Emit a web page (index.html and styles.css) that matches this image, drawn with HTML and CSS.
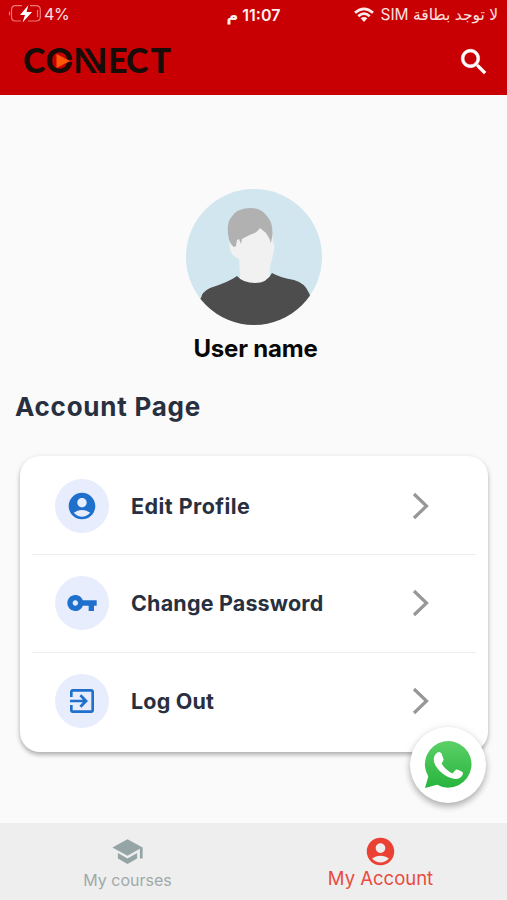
FILE: index.html
```html
<!DOCTYPE html>
<html lang="en">
<head>
<meta charset="utf-8">
<title>Account Page</title>
<link rel="stylesheet" href="styles.css">
</head>
<body>
<header class="header">
  <div class="status">
    <div class="battery">
      <svg width="34" height="20" viewBox="0 0 34 20"><path d="M14 1.700H7.500Q3.500 1.700 3.500 6V13Q3.500 17 7.500 17H13M22 1.700H28Q32.300 1.700 32.300 6V13Q32.300 17 28 17H20M29.500 6V13" fill="none" stroke="#ef7777" stroke-width="1.2"/><path d="M2 7Q-.5 9.400 2 12Z" fill="#ef7777"/><path d="M20.500 1L12 11H17L14.500 18.500L24 8H18.500Z" fill="#fff"/></svg>
      <span class="percent">4%</span>
    </div>
    <div class="clock" dir="rtl">11:07 م</div>
    <div class="carrier">
      <svg width="20" height="16" viewBox="0 0 20 16"><g fill="none" stroke="#ffe9e9" stroke-width="2.700"><path d="M1 5.800Q10-2.200 19 5.800"/><path d="M4.300 9.300Q10 4.100 15.700 9.300"/></g><path d="M6.600 11.300Q10 8.500 13.400 11.300L10 15Z" fill="#ffe9e9"/></svg>
      <span class="sim" dir="rtl">لا توجد بطاقة SIM</span>
    </div>
  </div>
  <div class="toolbar">
    <svg class="logo" width="160" height="46" viewBox="-2 -8 160 46" aria-label="CONNECT">
      <text class="letters" x="0 22.500 50.500 58 85 103 127.500" y="26">CONNECT</text>
      <path d="M57.500 0H76.500V28H57.500Z" fill="#c80003"/>
      <path d="M53 1.500H58L74 26H69ZM61.500 1.500H66.500L81.500 26H77Z" fill="#170c08"/>
      <path d="M40 12.800H50V15.200H40Z" fill="#c80003"/>
      <path d="M33.500 7V21L47 14Z" fill="#fa5706"/>
    </svg>
    <svg class="search" width="34" height="34" viewBox="0 0 24 24"><path fill="#fff" stroke="#fff" stroke-width=".4" d="M15.500 14h-.79l-.28-.27A6.500 6.500 0 1 0 13.730 14.430l.27.28v.79l5 4.990L20.490 19zm-6 0A4.500 4.500 0 1 1 9.500 5a4.500 4.500 0 0 1 0 9z"/></svg>
  </div>
</header>

<main class="content">
  <section class="user">
    <svg width="136" height="136" viewBox="0 0 136 136">
      <defs><clipPath id="disc"><circle cx="68" cy="68" r="68"/></clipPath></defs>
      <g clip-path="url(#disc)">
        <rect width="136" height="136" fill="#d1e6ee"/>
        <path d="M44 50Q42 59 46 65Q49 69 53 70Q54 82 54 90L51 97V106Q69 116 89 105L84 90L84 78Q87 67 88 61Q89 56 87 53L86 38L63 37L46 50Z" fill="#f1f1f1"/>
        <path d="M48 58Q43 55 42 45Q41 35 44 30Q50 19 64 19Q75 19 80 26Q87 33 86.500 45L85 54Q83 48 80 44L74 39Q71 44 66 45Q61 47 56 50L55 55L53 50L51 51L50 57Z" fill="#b1b1b1"/>
        <path d="M0 136V118L15 109Q16 103 24 99Q43 93 51 87Q57 94 69 94Q81 94 86 84Q95 89 108 91Q119 94 123 104L136 136Z" fill="#4d4d4d"/>
      </g>
    </svg>
    <div class="name">User name</div>
  </section>
  <h1 class="title">Account Page</h1>
  <nav class="card">
    <a class="row">
      <span class="bubble"><svg width="32" height="32" viewBox="0 0 24 24"><path d="M12 2C6.480 2 2 6.480 2 12s4.480 10 10 10 10-4.480 10-10S17.520 2 12 2zm0 4c1.930 0 3.500 1.570 3.500 3.500S13.930 13 12 13s-3.500-1.570-3.500-3.500S10.070 6 12 6zm0 14c-2.030 0-4.430-.82-6.140-2.880C7.550 15.800 9.680 15 12 15s4.450.8 6.140 2.120C16.430 19.180 14.030 20 12 20z"/></svg></span>
      <span class="label edit">Edit Profile</span>
      <svg class="chevron" width="18" height="28" viewBox="0 0 18 28"><path d="M2 2L14.500 14L2 26"/></svg>
    </a>
    <a class="row">
      <span class="bubble"><svg width="32" height="32" viewBox="0 0 24 24"><path d="M12.650 10C11.830 7.670 9.610 6 7 6c-3.310 0-6 2.690-6 6s2.690 6 6 6c2.610 0 4.830-1.670 5.650-4H17v4h4v-4h2v-4H12.650zM7 14c-1.100 0-2-.9-2-2s.9-2 2-2 2 .9 2 2-.9 2-2 2z"/></svg></span>
      <span class="label">Change Password</span>
      <svg class="chevron" width="18" height="28" viewBox="0 0 18 28"><path d="M2 2L14.500 14L2 26"/></svg>
    </a>
    <a class="row">
      <span class="bubble"><svg width="32" height="32" viewBox="0 0 24 24"><path d="M10.090 15.590L11.500 17l5-5-5-5-1.410 1.410L12.670 11H3v2h9.670l-2.580 2.590zM19 3H5c-1.110 0-2 .9-2 2v4h2V5h14v14H5v-4H3v4c0 1.100.89 2 2 2h14c1.100 0 2-.9 2-2V5c0-1.100-.9-2-2-2z"/></svg></span>
      <span class="label">Log Out</span>
      <svg class="chevron" width="18" height="28" viewBox="0 0 18 28"><path d="M2 2L14.500 14L2 26"/></svg>
    </a>
  </nav>
</main>

<a class="whatsapp">
  <svg width="50" height="50" viewBox="0 0 50 50">
    <defs><linearGradient id="green" x2="0" y2="1"><stop stop-color="#5bd066"/><stop offset="1" stop-color="#27b43e"/></linearGradient></defs>
    <path fill="url(#green)" d="M2 48L5.300 36.500A23.300 23.300 0 1 1 14 44.800Z"/>
    <path fill="#fff" d="M14.500 12.500Q17 11 18.500 13.500L20.500 19Q21 20.500 18.500 23.500Q22.500 30 29.500 33.500L33 29.500Q34 29 39 31.800Q40.500 32.500 39.500 35Q37 39.500 31 38.800C22 37.500 10.500 27.500 10.800 19.500Q11 14.500 14.500 12.500Z"/>
  </svg>
</a>

<footer class="tabs">
  <a class="tab courses">
    <svg width="33" height="33" viewBox="0 0 24 24"><path d="M5 13.180v4L12 21l7-3.820v-4L12 17l-7-3.820zM12 3L1 9l11 6 9-4.910V17h2V9L12 3z"/></svg>
    <span>My courses</span>
  </a>
  <a class="tab account">
    <svg width="33" height="33" viewBox="0 0 24 24"><path d="M12 2C6.480 2 2 6.480 2 12s4.480 10 10 10 10-4.480 10-10S17.520 2 12 2zm0 4c1.930 0 3.500 1.570 3.500 3.500S13.930 13 12 13s-3.500-1.570-3.500-3.500S10.070 6 12 6zm0 14c-2.030 0-4.430-.82-6.140-2.880C7.550 15.800 9.680 15 12 15s4.450.8 6.140 2.120C16.430 19.180 14.030 20 12 20z"/></svg>
    <span>My Account</span>
  </a>
</footer>
</body>
</html>
```
FILE: styles.css
```css
* { box-sizing: border-box; }
body {
  margin: 0;
  width: 507px;
  height: 900px;
  overflow: hidden;
  display: flex;
  flex-direction: column;
  background: #fafafa;
  font-family: Inter, "DejaVu Sans", sans-serif;
  position: relative;
}
svg { display: block; flex: none; }
.header { height: 95px; background: #c80003; flex: none; }
.status {
  height: 30px;
  display: grid;
  grid-template-columns: 1fr auto 1fr;
  align-items: center;
  padding: 0 9px 0 8px;
  color: #ffe0e0;
  white-space: nowrap;
}
.battery { display: flex; align-items: center; gap: 2px; margin-top: -2px; }
.percent { font-size: 16px; line-height: 20px; letter-spacing: -.4px; }
.clock { font-size: 16px; font-weight: 600; line-height: 20px; color: #fff0f0; padding-left: 1px; }
.carrier { display: flex; justify-content: flex-end; align-items: center; gap: 6px; }
.sim { font-size: 15.5px; line-height: 20px; }
.toolbar {
  height: 65px;
  display: flex;
  justify-content: space-between;
  align-items: flex-start;
  padding: 15px 16px 0 23px;
}
.logo { margin: -6px 0 0 -2px; }
.letters { font-family: Lato, sans-serif; font-weight: 900; font-size: 34px; fill: #170c08; }
.content { flex: 1; padding: 94px 19px 0 20px; }
.user { display: flex; flex-direction: column; align-items: center; }
.name {
  margin: 8px 0 0 3px;
  font-size: 24px;
  font-weight: 700;
  line-height: 32px;
  letter-spacing: -.2px;
  color: #080808;
}
.title {
  margin: 25px 0 0 -5px;
  font-size: 26px;
  line-height: 34px;
  font-weight: 700;
  letter-spacing: .75px;
  color: #28303f;
}
.card {
  margin-top: 32px;
  height: 296px;
  padding: 1px 12px;
  background: #fff;
  border-radius: 20px;
  box-shadow: 0 3px 4px rgba(0, 0, 0, .25), 0 1px 6px rgba(0, 0, 0, .08);
}
.row {
  height: 97.33px;
  display: flex;
  align-items: center;
  padding: 0 46px 0 23px;
}
.row + .row { border-top: 1px solid #ededee; }
.bubble {
  width: 54px;
  height: 54px;
  border-radius: 50%;
  background: #e7edfd;
  display: grid;
  place-items: center;
  margin-right: 22px;
}
.bubble svg { fill: #1f70cd; }
.label { flex: 1; font-size: 21.5px; font-weight: 700; color: #28303f; letter-spacing: .18px; }
.edit { letter-spacing: .45px; }
.chevron { fill: none; stroke: #979797; stroke-width: 3.2; }
.whatsapp {
  position: absolute;
  right: 21px;
  bottom: 97px;
  width: 76px;
  height: 76px;
  border-radius: 50%;
  background: #fff;
  display: grid;
  place-items: center;
  box-shadow: 0 4px 6px rgba(0, 0, 0, .24), 0 1px 8px rgba(0, 0, 0, .1);
}
.tabs { height: 77px; flex: none; display: flex; background: #eee; }
.tab { flex: 1; display: flex; flex-direction: column; align-items: center; padding: 12px 0 0 1px; }
.tab span { white-space: nowrap; line-height: 22px; }
.courses { color: #a0a9aa; fill: #95a5a6; font-size: 16px; }
.courses span { margin-top: 1px; }
.account { color: #e84b40; fill: #eb4134; font-size: 18.5px; padding-left: 0; }
.account span { margin-top: -1px; }
```
